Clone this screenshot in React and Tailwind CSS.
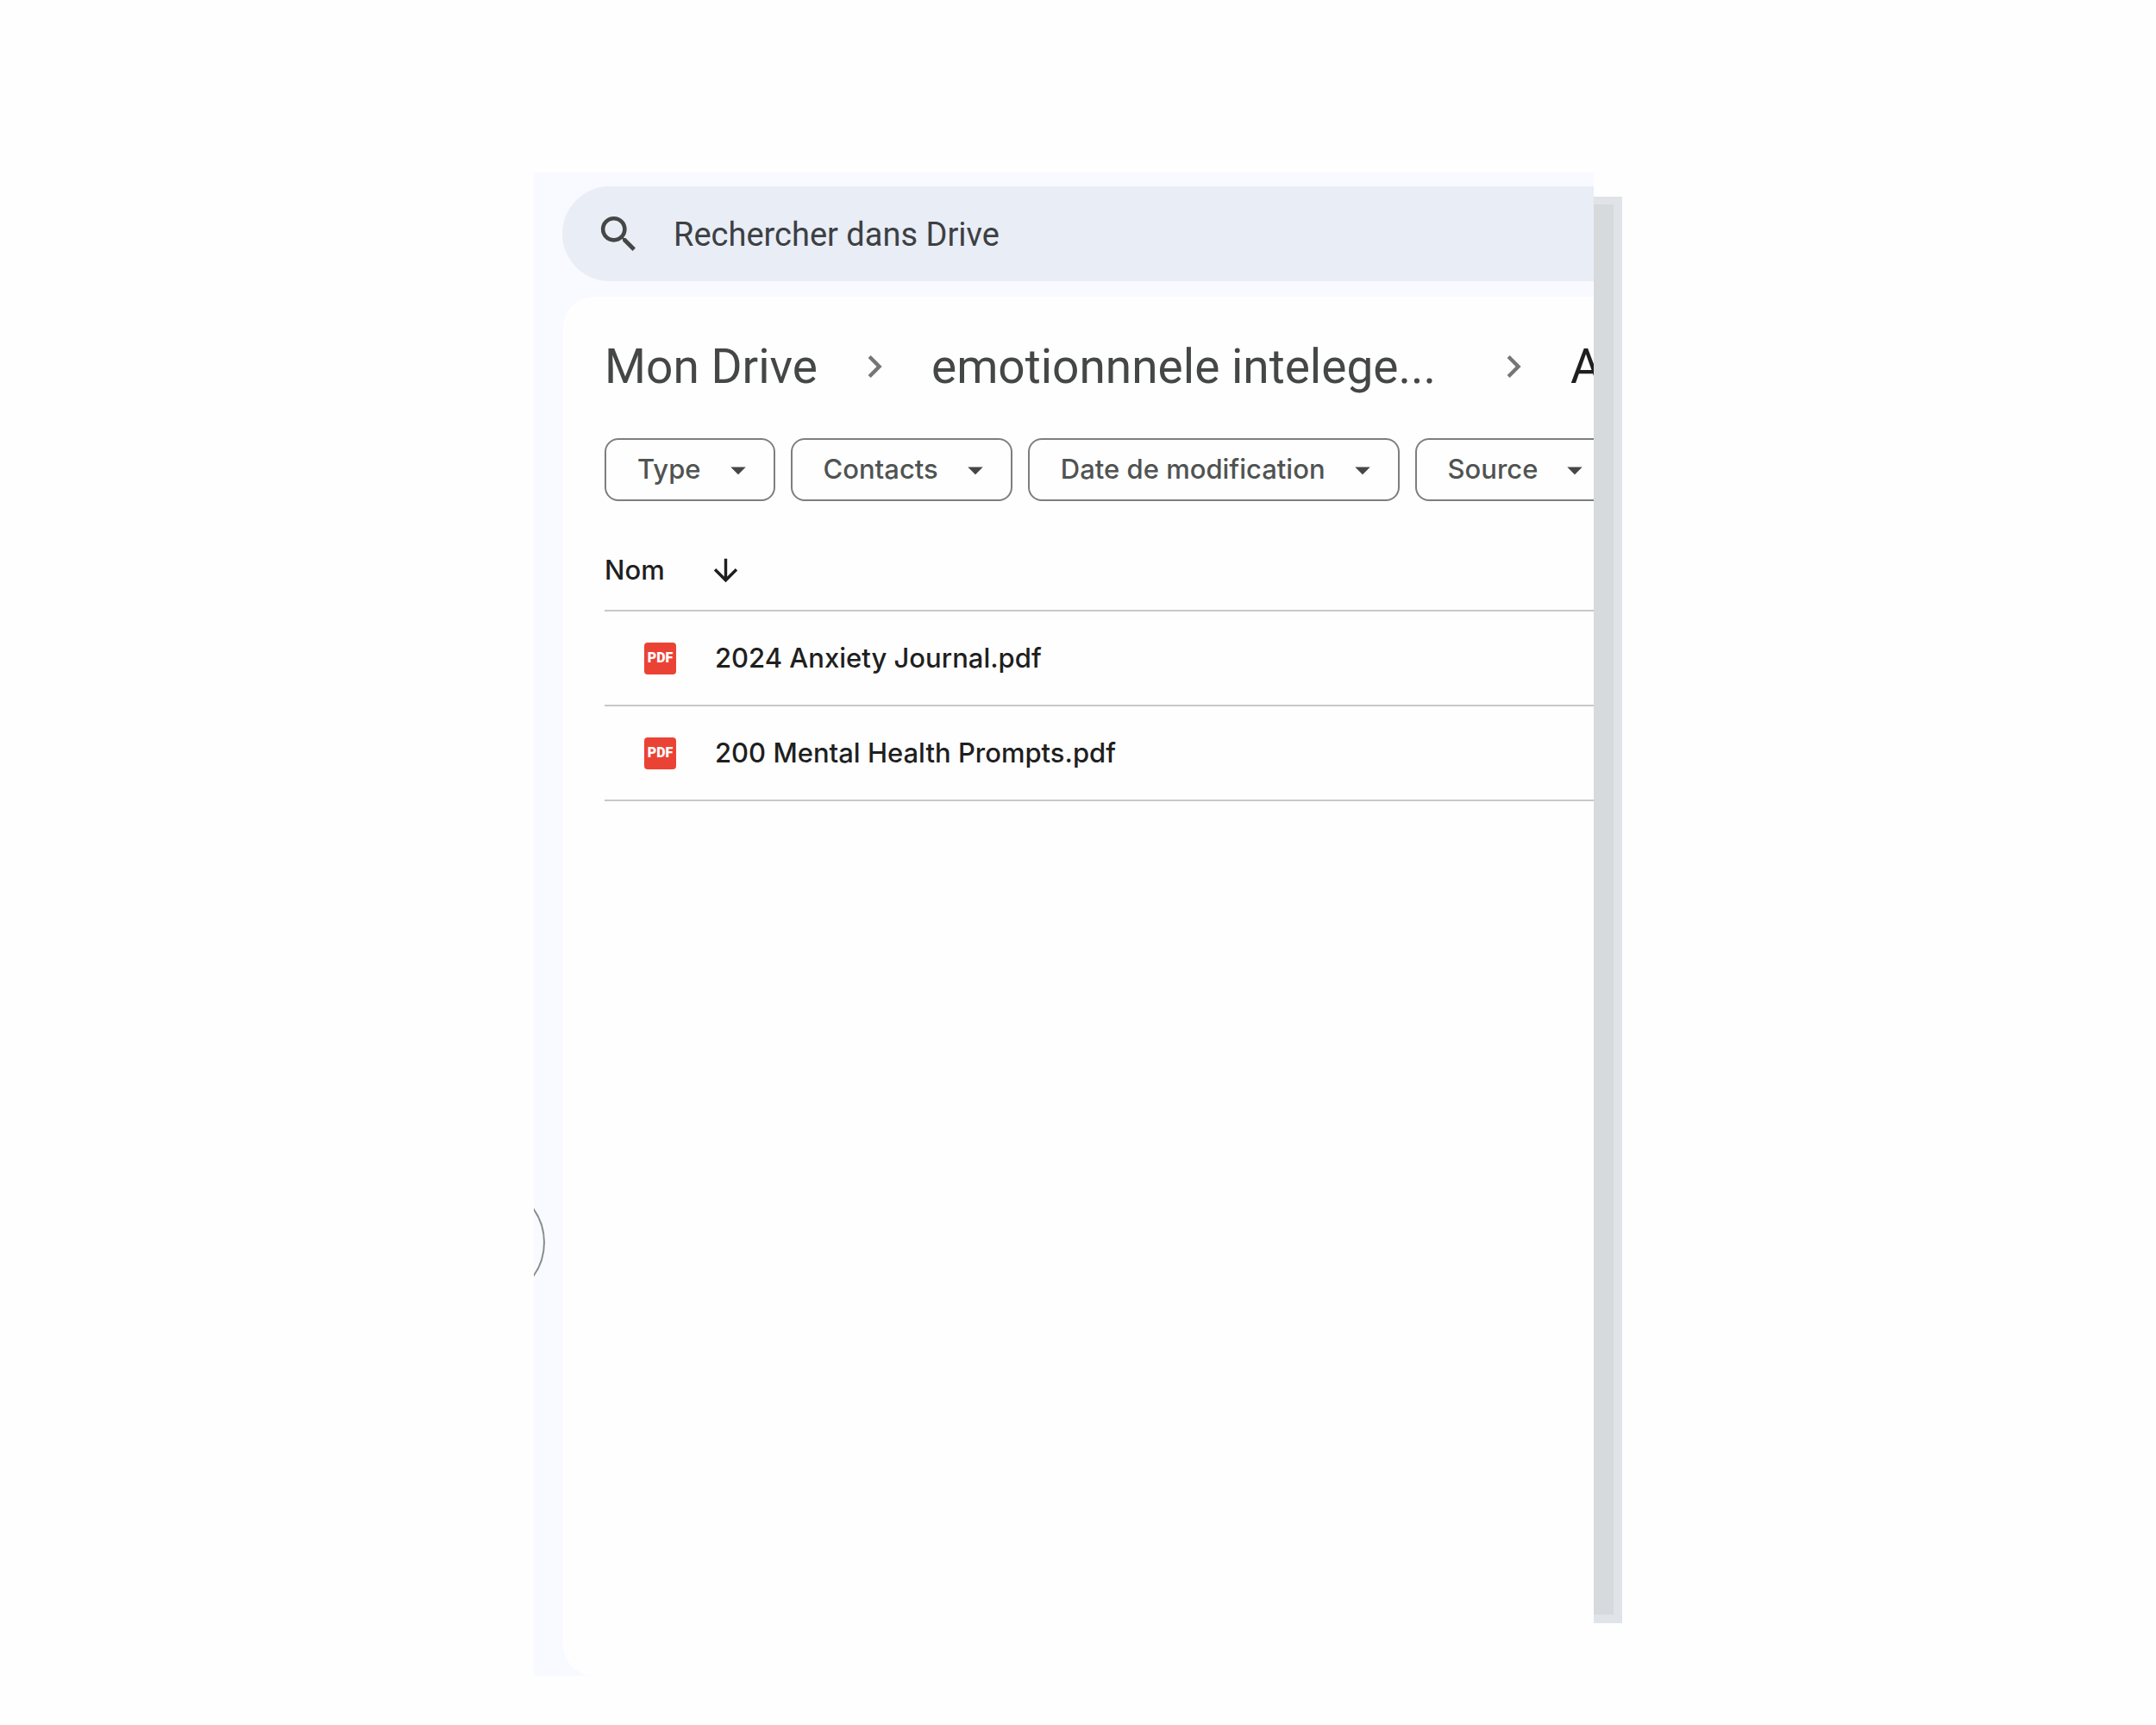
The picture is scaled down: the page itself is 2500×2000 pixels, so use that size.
import React from "react";
import {
  MdSearch,
  MdChevronRight,
  MdArrowDropDown,
  MdArrowDownward,
} from "react-icons/md";

const filters = ["Type", "Contacts", "Date de modification", "Source"];
const files = ["2024 Anxiety Journal.pdf", "200 Mental Health Prompts.pdf"];

function SearchBar() {
  return (
    <label className="ml-[33px] mt-4 flex h-[110px] shrink-0 items-center gap-9 rounded-l-full bg-[#e9edf6] pl-[38px]">
      <MdSearch className="size-[55px] shrink-0 text-[#444746]" />
      <input
        type="search"
        aria-label="Rechercher dans Drive"
        placeholder="Rechercher dans Drive"
        className="h-full min-w-0 flex-1 bg-transparent pt-0.5 font-[Roboto] text-[38px] text-[#3c4043] outline-none placeholder:text-[#3c4043] placeholder:opacity-100"
      />
    </label>
  );
}

function Breadcrumb() {
  return (
    <nav
      aria-label="Fil d'Ariane"
      className="flex h-[74px] items-center gap-10 overflow-hidden whitespace-nowrap font-[Roboto] text-[55px] leading-[74px] text-[#444746]"
    >
      <a href="#mon-drive" className="shrink-0">Mon Drive</a>
      <MdChevronRight className="size-[52px] shrink-0 text-[#747775]" />
      <a href="#dossier" className="mr-6 shrink-0">emotionnnele intelege...</a>
      <MdChevronRight className="size-[52px] shrink-0 text-[#747775]" />
      <a href="#courant" className="shrink-0 text-[#1f1f1f]">A</a>
    </nav>
  );
}

function FilterChip({ label }) {
  return (
    <button
      type="button"
      className="flex h-[73px] shrink-0 items-center gap-[22px] rounded-2xl border-2 border-[#7c7f7d] pl-9 pr-5 text-[31px] font-medium text-[#505352]"
    >
      {label}
      <MdArrowDropDown className="size-[42px] text-[#444746]" />
    </button>
  );
}

function PdfIcon() {
  return (
    <span
      aria-hidden="true"
      className="flex size-[37px] shrink-0 items-center justify-center rounded bg-[#ea4335] font-[Roboto] text-base font-black leading-none text-white"
    >
      PDF
    </span>
  );
}

function FileTable() {
  return (
    <table className="mt-[34px] w-full border-separate border-spacing-0 text-[31px] font-medium text-[#1f1f1f]">
      <thead>
        <tr>
          <th scope="col" className="h-[94px] border-b-2 border-[#c7c9c8] p-0 text-left font-medium">
            <button type="button" className="flex items-center gap-[50px]">
              Nom
              <MdArrowDownward className="size-[41px]" />
            </button>
          </th>
        </tr>
      </thead>
      <tbody>
        {files.map((name) => (
          <tr key={name}>
            <td className="h-[110px] border-b-2 border-[#c7c9c8] p-0">
              <div className="flex items-center gap-[45px] whitespace-nowrap pl-[46px]">
                <PdfIcon />
                {name}
              </div>
            </td>
          </tr>
        ))}
      </tbody>
    </table>
  );
}

export default function App() {
  return (
    <div className="flex min-h-screen bg-[#fefefe] px-6 pb-[57px] pt-[200px] font-[Inter,sans-serif]">
      <div className="mx-auto flex w-full max-w-[1262px]">
        <main className="relative flex min-w-0 flex-1 flex-col overflow-hidden bg-[#f9faff]">
          <SearchBar />
          <section className="ml-[34px] mt-[18px] flex-1 overflow-hidden rounded-l-[36px] bg-[#fefefe] pl-12 pt-11">
            <Breadcrumb />
            <div className="mt-[46px] flex gap-[18px] overflow-hidden">
              {filters.map((label) => (
                <FilterChip key={label} label={label} />
              ))}
            </div>
            <FileTable />
          </section>
          <button
            type="button"
            aria-label="Afficher le panneau latéral"
            className="absolute -left-[122px] top-[1173px] size-[135px] rounded-full border-2 border-[#8a8d8b]"
          />
        </main>
        <aside className="mb-[61px] mt-7 flex w-[33px] shrink-0 bg-[#e0e4e9] pb-2.5 pr-2.5 pt-[9px]">
          <div className="flex-1 bg-[#d6dadd]" />
        </aside>
      </div>
    </div>
  );
}
